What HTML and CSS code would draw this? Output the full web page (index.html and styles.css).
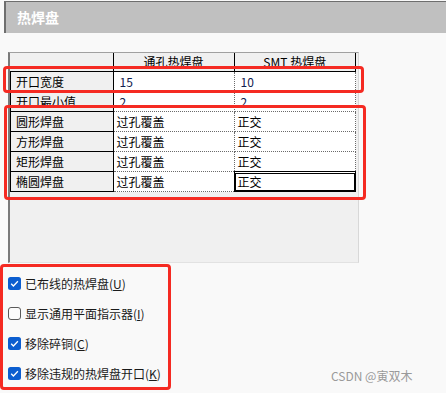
FILE: index.html
```html
<!DOCTYPE html>
<html lang="zh">
<head>
    <meta charset="UTF-8">
    <title>热焊盘</title>
    <link rel="stylesheet" href="styles.css">
</head>
<body>

<div class="titlebar">热焊盘</div>

<div class="grid-panel">
    <table class="pad-table">
        <thead>
            <tr>
                <th class="row-head"></th>
                <th>通孔热焊盘</th>
                <th>SMT 热焊盘</th>
            </tr>
        </thead>
        <tbody>
            <tr><td class="row-head">开口宽度</td><td class="num">15</td><td class="num">10</td></tr>
            <tr><td class="row-head">开口最小值</td><td class="num">2</td><td class="num">2</td></tr>
            <tr><td class="row-head">圆形焊盘</td><td>过孔覆盖</td><td>正交</td></tr>
            <tr><td class="row-head">方形焊盘</td><td>过孔覆盖</td><td>正交</td></tr>
            <tr><td class="row-head">矩形焊盘</td><td>过孔覆盖</td><td>正交</td></tr>
            <tr><td class="row-head">椭圆焊盘</td><td>过孔覆盖</td><td class="editing">正交</td></tr>
        </tbody>
    </table>
</div>

<div class="options">
    <label class="opt">
        <svg class="box on" width="13" height="13" viewBox="0 0 13 13"><rect x="0" y="0" width="13" height="13" rx="2.5" fill="#0b5ed0"/><path d="M3.2 6.8 L5.4 9 L9.9 4.3" fill="none" stroke="#fff" stroke-width="1.3"/></svg>
        <span>已布线的热焊盘(<u>U</u>)</span>
    </label>
    <label class="opt">
        <svg class="box" width="13" height="13" viewBox="0 0 13 13"><rect x="0.5" y="0.5" width="12" height="12" rx="2.5" fill="#fbfbfb" stroke="#5a5a5a"/></svg>
        <span>显示通用平面指示器(<u>I</u>)</span>
    </label>
    <label class="opt">
        <svg class="box on" width="13" height="13" viewBox="0 0 13 13"><rect x="0" y="0" width="13" height="13" rx="2.5" fill="#0b5ed0"/><path d="M3.2 6.8 L5.4 9 L9.9 4.3" fill="none" stroke="#fff" stroke-width="1.3"/></svg>
        <span>移除碎铜(<u>C</u>)</span>
    </label>
    <label class="opt">
        <svg class="box on" width="13" height="13" viewBox="0 0 13 13"><rect x="0" y="0" width="13" height="13" rx="2.5" fill="#0b5ed0"/><path d="M3.2 6.8 L5.4 9 L9.9 4.3" fill="none" stroke="#fff" stroke-width="1.3"/></svg>
        <span>移除违规的热焊盘开口(<u>K</u>)</span>
    </label>
</div>

<!-- red annotation boxes -->
<div class="mark mark-width"></div>
<div class="mark mark-shapes"></div>
<div class="mark mark-options"></div>

<div class="watermark">CSDN @寅双木</div>

</body>
</html>
```

FILE: styles.css
```css
/* General styles */
body {
    margin: 0;
    padding: 0;
    background-color: #f9f9f9;
    font-family: "Noto Sans CJK SC", "Liberation Sans", sans-serif;
    font-size: 12px;
    color: #000;
    position: relative;
    width: 446px;
    height: 393px;
    overflow: hidden;
}

.titlebar {
    margin: 1px 0 0 4px;
    height: 31px;
    line-height: 30px;
    padding-left: 11px;
    background-color: #c0c0c0;
    border-top: 1px solid #6e6e6e;
    border-left: 2px solid #6e6e6e;
    color: #fff;
    font-weight: bold;
    font-size: 14px;
}

/* Grid */
.grid-panel {
    margin: 19px 0 0 8px;
    width: 348px;
    height: 209px;
    background-color: #f0f0f0;
    border-top: 1px solid #a0a0a0;
    border-left: 2px solid #7a7a7a;
    border-right: 1px solid #d8d8d8;
    border-bottom: 1px solid #e2e2e2;
}

.pad-table {
    border-collapse: collapse;
    width: 346px;
    table-layout: fixed;
}

.pad-table th {
    height: 18px;
    padding: 0;
    font-weight: normal;
    background-color: #f0f0f0;
    border-right: 1px solid #000;
    border-bottom: 1px solid #000;
    line-height: 16px;
    text-align: center;
}

.pad-table th:nth-child(1) { width: 102px; }
.pad-table th:nth-child(2) { width: 120px; }

.pad-table td {
    height: 19px;
    padding: 0 0 0 3px;
    line-height: 18px;
    background-color: #fff;
    border-right: 1px dotted #6a6a6a;
    border-bottom: 1px dotted #6a6a6a;
    white-space: nowrap;
}

.pad-table td.row-head {
    background-color: #f0f0f0;
    border: 1px solid #000;
    border-top: none;
    padding-left: 5px;
}

.pad-table td.num {
    padding-left: 6px;
    color: #102050;
}

.pad-table td.editing {
    border: 1px solid #000;
    outline: 1px solid #000;
    outline-offset: -2px;
}

/* Options */
.options {
    display: flex;
    flex-direction: column;
    gap: 13px;
    margin: 12px 0 0 8px;
    font-size: 12px;
}

.opt {
    display: flex;
    align-items: center;
    gap: 4px;
    height: 17px;
    color: #1a1a1a;
}

.opt .box {
    flex: none;
}

/* Annotations */
.mark {
    position: absolute;
    border: 3px solid #f52a22;
    border-radius: 4px;
    box-sizing: border-box;
}

.mark-width { left: 3px; top: 66px; width: 361px; height: 27px; }
.mark-shapes { left: 4px; top: 105px; width: 362px; height: 95px; }
.mark-options { left: 0; top: 264px; width: 171px; height: 126px; }

.watermark {
    position: absolute;
    left: 331px;
    top: 367px;
    color: #9a9a9a;
    font-size: 12px;
}
```
